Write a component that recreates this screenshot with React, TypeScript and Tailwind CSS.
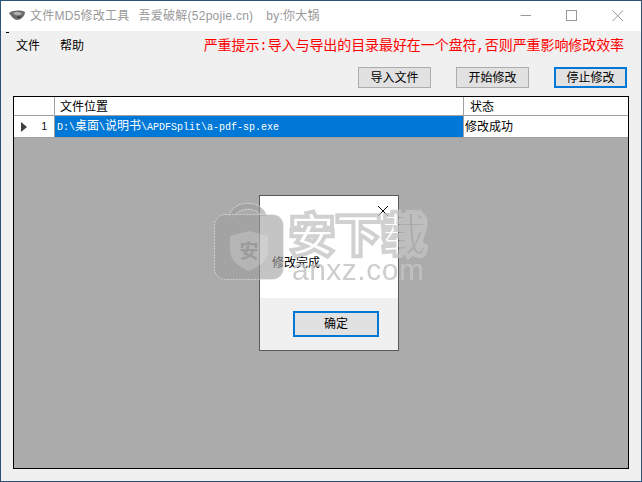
const cjk = "font-['Liberation_Sans','Noto_Sans_CJK_SC',sans-serif]";

function Btn({ label, active }: { label: string; active?: boolean }) {
  return (
    <button
      className={
        "w-[73px] h-[21px] bg-[#e1e1e1] text-[12px] text-black leading-none flex items-center justify-center " +
        (active ? "border-2 border-[#0078d7]" : "border border-[#adadad]")
      }
    >
      {label}
    </button>
  );
}

function Watermark() {
  return (
    <div className="absolute left-[212px] top-[199px] w-[220px] h-[82px] flex gap-[4px] pointer-events-none">
      <svg width="72" height="81" viewBox="0 0 72 81" className="shrink-0">
        {/* handle */}
        <path
          d="M16 16 C20 -1 50 -1 54 16 H48 C44 7 26 7 22 16 Z"
          fill="#9f9f9f"
          fillOpacity="0.61"
          stroke="#ffffff"
          strokeOpacity="0.55"
          strokeDasharray="2 1"
        />
        {/* body */}
        <rect x="1.5" y="14.5" width="69" height="65" rx="11" fill="#9f9f9f" fillOpacity="0.61" stroke="#ffffff" strokeOpacity="0.45" strokeDasharray="2 1" />
        {/* shield */}
        <path d="M36 31 L55 36 V51 C55 61 45 67 36 71 C27 67 17 61 17 51 V36 Z" fill="#ffffff" fillOpacity="0.2" />
        <text x="36" y="58" textAnchor="middle" fontSize="19" fontWeight="700" fill="#8a8a8a" fillOpacity="0.6" fontFamily="'Noto Sans CJK SC',sans-serif">安</text>
      </svg>
      <div className="flex flex-col items-start drop-shadow-[0_0_0.6px_rgba(255,255,255,0.9)]">
        <div className="h-[60px] mt-[1px] text-[46px] leading-[60px] font-black text-transparent [-webkit-text-stroke:4px_rgba(171,171,171,0.55)] whitespace-nowrap font-['Noto_Sans_CJK_SC',sans-serif]">
          安下载
        </div>
        <div className="-mt-[2px] ml-[3px] text-[30px] leading-[22px] tracking-[0.5px] font-['Liberation_Sans',sans-serif] text-[#ababab]/60 whitespace-nowrap">
          anxz.com
        </div>
      </div>
    </div>
  );
}

export default function App() {
  return (
    <div className={"relative w-[642px] h-[482px] overflow-hidden flex flex-col border border-[#2b5278] bg-[#f0f0f0] " + cjk}>
      {/* title bar */}
      <div className="h-[30px] shrink-0 bg-white flex items-center pl-[8px]">
        <svg width="17" height="12" viewBox="0 0 17 12" className="mr-[4px]">
          <path d="M0 3 C4 0 12 0 16 2 C16 6 12 10 8 10 C5 10 2 6 0 3 Z" fill="#6a6a6a" />
          <path d="M4 3 C7 1.5 11 2 13 3.5 C11 6 6 6 4 3 Z" fill="#b0b0b0" />
          <path d="M8 6 C9 7 11 7 12 6 C11 9 9 9 8 6 Z" fill="#2e2e2e" />
        </svg>
        <span className="text-[12px] tracking-[0.25px] text-[#999] whitespace-pre">文件MD5修改工具</span>
        <span className="ml-[9px] text-[12px] tracking-[0.25px] text-[#999] whitespace-pre">吾爱破解(52pojie.cn)</span>
        <span className="ml-[13px] text-[12px] tracking-[0.25px] text-[#999] whitespace-pre">by:你大锅</span>
        <div className="ml-auto flex items-center">
          <svg width="46" height="30" viewBox="0 0 46 30"><path d="M17.5 14.5 H28" stroke="#999" /></svg>
          <svg width="46" height="30" viewBox="0 0 46 30"><rect x="17.5" y="9.5" width="10" height="10" fill="none" stroke="#999" /></svg>
          <svg width="46" height="30" viewBox="0 0 46 30"><path d="M17.5 9.5 L28 20 M28 9.5 L17.5 20" stroke="#999" /></svg>
        </div>
      </div>

      {/* menu + notice */}
      <div className="relative h-[30px] shrink-0 flex items-center pl-[15px] pr-[17px] text-[12px] text-black">
        <span className="absolute left-[5px] top-[1px] w-[3px] h-px bg-black" />
        <span className="w-[44px]">文件</span>
        <span>帮助</span>
        <span className="ml-auto text-[14px] tracking-[-0.08px] text-[#ff0000] whitespace-nowrap font-['Liberation_Mono','Noto_Sans_CJK_SC',monospace]">严重提示:导入与导出的目录最好在一个盘符,否则严重影响修改效率</span>
      </div>

      {/* actions */}
      <div className="h-[35px] shrink-0 flex justify-end items-start gap-[25px] pr-[14px] pt-[6px]">
        <Btn label="导入文件" />
        <Btn label="开始修改" />
        <Btn label="停止修改" active />
      </div>

      {/* grid */}
      <div className="mx-[12px] w-[616px] h-[373px] border border-black bg-[#ababab] flex flex-col text-[12px] text-black">
        <div className="h-[19px] flex bg-white border-b border-[#a0a0a0]">
          <div className="w-[41px] border-r border-[#a0a0a0]" />
          <div className="w-[409px] pl-[5px] leading-[20px] border-r border-[#a0a0a0]">文件位置</div>
          <div className="flex-1 pl-[6px] leading-[20px]">状态</div>
        </div>
        <div className="h-[22px] flex border-b border-[#a0a0a0]">
          <div className="w-[41px] bg-white border-r border-[#a0a0a0] flex items-center justify-between pl-[7px] pr-[7px]">
            <svg width="6" height="10" viewBox="0 0 6 10"><path d="M0 0 L6 5 L0 10 Z" fill="#404040" /></svg>
            <span className="text-[10px]">1</span>
          </div>
          <div className="w-[409px] bg-[#0078d7] text-white pl-[2px] border-r border-[#a0a0a0] leading-[22px] whitespace-nowrap font-['Liberation_Mono','Noto_Sans_CJK_SC',monospace] text-[10px]">
            D:\<span className="text-[12px]">桌面</span>\<span className="text-[12px]">说明书</span>\APDFSplit\a-pdf-sp.exe
          </div>
          <div className="flex-1 bg-white pl-[1px] leading-[23px]">修改成功</div>
        </div>
      </div>

      {/* dialog */}
      <div className="absolute left-[258px] top-[194px] w-[140px] h-[156px] border border-[#5a5a5a] bg-white flex flex-col">
        <div className="h-[102px] relative">
          <svg width="12" height="12" viewBox="0 0 12 12" className="absolute right-[9px] top-[9px]">
            <path d="M1 1 L11 11 M11 1 L1 11" stroke="#000" />
          </svg>
          <span className="absolute left-[12px] top-[60px] text-[12px] leading-[14px] text-black">修改完成</span>
        </div>
        <div className="flex-1 bg-[#f0f0f0] flex items-start pt-[13px] pl-[33px]">
          <button className="w-[86px] h-[26px] bg-[#e1e1e1] border-2 border-[#0078d7] text-[12px] text-black flex items-center justify-center">确定</button>
        </div>
      </div>

      <Watermark />
    </div>
  );
}
